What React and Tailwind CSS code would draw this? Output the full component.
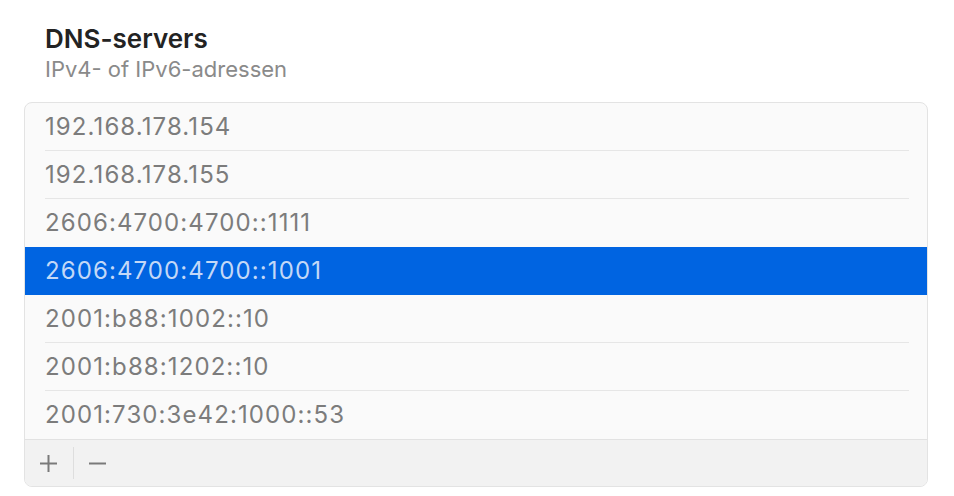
import React from 'react';

const servers = [
    '192.168.178.154',
    '192.168.178.155',
    '2606:4700:4700::1111',
    '2606:4700:4700::1001',
    '2001:b88:1002::10',
    '2001:b88:1202::10',
    '2001:730:3e42:1000::53',
];

const SELECTED = 3;

export default function App() {
    return (
        <div
            className="w-[954px] h-[496px] bg-white pt-[23px] px-6"
            style={{ fontFamily: 'Inter, "Noto Sans", sans-serif' }}
        >
            {/* Header */}
            <div className="pl-[21px]">
                <h1 className="text-[26px] leading-[32px] font-semibold text-[#232323]">
                    DNS-servers
                </h1>
                <p className="mt-px text-[22px] leading-[26px] text-[#8a8a8a]">IPv4- of IPv6-adressen</p>
            </div>

            {/* List box */}
            <div className="mt-[20px] w-[904px] rounded-lg border border-[#e3e3e3] bg-[#fafafa] overflow-hidden">
                <ul>
                    {servers.map((s, i) => {
                        const selected = i === SELECTED;
                        const nextSelected = i + 1 === SELECTED;
                        const last = i === servers.length - 1;
                        return (
                            <li
                                key={s}
                                className={`relative h-12 flex items-center pl-5 text-[24px] tracking-[1.1px] ${
                                    selected ? 'bg-[#0064e1] text-[#c3d8f7]' : 'text-[#7c7c7c]'
                                }`}
                            >
                                <span className="-mt-px">{s}</span>
                                {!selected && !nextSelected && !last && (
                                    <div className="absolute bottom-0 left-5 right-[18px] h-px bg-[#e6e6e6]" />
                                )}
                            </li>
                        );
                    })}
                </ul>

                {/* Footer with add/remove */}
                <div className="h-[47px] border-t border-[#e2e2e2] bg-[#f2f2f2] flex items-center">
                    <button className="w-[46px] h-full flex items-center justify-center text-[#7a7a7a]">
                        <svg width="19" height="19" viewBox="0 0 19 19" fill="none" stroke="currentColor" strokeWidth="2">
                            <path d="M9.5 1v17M1 9.5h17" />
                        </svg>
                    </button>
                    <div className="ml-[2px] w-px h-8 bg-[#dedede]" />
                    <button className="w-[47px] h-full flex items-center justify-center text-[#7a7a7a]">
                        <svg width="19" height="19" viewBox="0 0 19 19" fill="none" stroke="currentColor" strokeWidth="2">
                            <path d="M1 9.5h17" />
                        </svg>
                    </button>
                </div>
            </div>
        </div>
    );
}
